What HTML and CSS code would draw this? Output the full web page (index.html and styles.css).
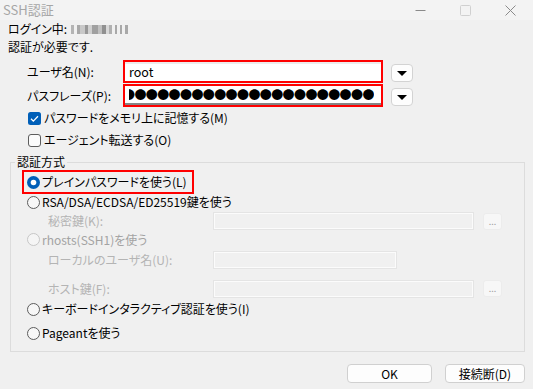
FILE: index.html
```html
<!DOCTYPE html>
<html lang="ja">
<head>
    <meta charset="UTF-8">
    <title>SSH認証</title>
    <link rel="stylesheet" href="styles.css">
</head>
<body>
    <div class="titlebar">
        <span class="title">SSH認証</span>
        <div class="win-controls">
            <span class="win-btn"><svg width="11" height="11" viewBox="0 0 11 11"><path d="M0.5 5.5h10" stroke="#8a8a8a" stroke-width="1"/></svg></span>
            <span class="win-btn"><svg width="11" height="11" viewBox="0 0 11 11"><rect x="0.5" y="0.5" width="10" height="10" rx="1" fill="none" stroke="#d0d0d0"/></svg></span>
            <span class="win-btn"><svg width="11" height="11" viewBox="0 0 11 11"><path d="M0.5 0.5l10 10M10.5 0.5l-10 10" stroke="#8a8a8a" stroke-width="1"/></svg></span>
        </div>
    </div>

    <div class="info">
        <div class="login-line">ログイン中: <span class="masked"></span></div>
        <div class="need-line">認証が必要です.</div>
    </div>

    <div class="field-row first">
        <label class="field-label" for="user">ユーザ名(N):</label>
        <div class="highlight">
            <div class="textbox user-box" id="user">root</div>
        </div>
        <span class="drop-btn"><svg width="10" height="5" viewBox="0 0 10 5"><path d="M0 0h10L5 5z" fill="#000"/></svg></span>
    </div>
    <div class="field-row">
        <label class="field-label" for="pass">パスフレーズ(P):</label>
        <div class="highlight">
            <div class="textbox pass-box" id="pass"><span class="dots">●●●●●●●●●●●●●●●●●●●●●●</span></div>
        </div>
        <span class="drop-btn"><svg width="10" height="5" viewBox="0 0 10 5"><path d="M0 0h10L5 5z" fill="#000"/></svg></span>
    </div>

    <div class="check-row">
        <svg class="box" width="13" height="13" viewBox="0 0 13 13"><rect x="0" y="0" width="13" height="13" rx="2.5" fill="#005fb8"/><path d="M3 6.8l2.3 2.3L10 4.3" fill="none" stroke="#fff" stroke-width="1.3"/></svg>
        <span>パスワードをメモリ上に記憶する(M)</span>
    </div>
    <div class="check-row">
        <svg class="box" width="13" height="13" viewBox="0 0 13 13"><rect x="0.5" y="0.5" width="12" height="12" rx="2.5" fill="#fbfbfb" stroke="#5c5c5c"/></svg>
        <span>エージェント転送する(O)</span>
    </div>

    <fieldset class="group">
        <legend>認証方式</legend>

        <div class="radio-row plain">
            <svg class="dot" width="13" height="13" viewBox="0 0 13 13"><circle cx="6.5" cy="6.5" r="6.5" fill="#005fb8"/><circle cx="6.5" cy="6.5" r="2.8" fill="#fff"/></svg>
            <span>プレインパスワードを使う(L)</span>
        </div>
        <div class="radio-row rsa">
            <svg class="dot" width="13" height="13" viewBox="0 0 13 13"><circle cx="6.5" cy="6.5" r="6" fill="#f7f7f7" stroke="#5c5c5c"/></svg>
            <span>RSA/DSA/ECDSA/ED25519鍵を使う</span>
        </div>
        <div class="sub-row priv">
            <span class="sub-label">秘密鍵(K):</span>
            <span class="dis-input wide"></span>
            <span class="browse-btn">...</span>
        </div>
        <div class="radio-row rhosts disabled">
            <svg class="dot" width="13" height="13" viewBox="0 0 13 13"><circle cx="6.5" cy="6.5" r="6" fill="#f5f5f5" stroke="#c6c6c6"/></svg>
            <span>rhosts(SSH1)を使う</span>
        </div>
        <div class="sub-row local">
            <span class="sub-label">ローカルのユーザ名(U):</span>
            <span class="dis-input narrow"></span>
        </div>
        <div class="sub-row host">
            <span class="sub-label">ホスト鍵(F):</span>
            <span class="dis-input wide"></span>
            <span class="browse-btn">...</span>
        </div>
        <div class="radio-row kbd">
            <svg class="dot" width="13" height="13" viewBox="0 0 13 13"><circle cx="6.5" cy="6.5" r="6" fill="#f7f7f7" stroke="#5c5c5c"/></svg>
            <span>キーボードインタラクティブ認証を使う(I)</span>
        </div>
        <div class="radio-row pageant">
            <svg class="dot" width="13" height="13" viewBox="0 0 13 13"><circle cx="6.5" cy="6.5" r="6" fill="#f7f7f7" stroke="#5c5c5c"/></svg>
            <span>Pageantを使う</span>
        </div>
    </fieldset>

    <div class="buttons">
        <button class="btn ok">OK</button>
        <button class="btn cancel">接続断(D)</button>
    </div>
</body>
</html>
```

FILE: styles.css
```css
html, body {
    margin: 0;
    padding: 0;
}

body {
    width: 533px;
    height: 389px;
    overflow: hidden;
    background-color: #f0f0f0;
    font-family: "Noto Sans CJK JP", "Noto Sans", sans-serif;
    font-size: 12px;
    line-height: 16px;
    font-feature-settings: "palt";
    color: #000;
}

.titlebar {
    display: flex;
    align-items: center;
    height: 20px;
    background-color: #f3f3f3;
}

.title {
    padding-left: 3px;
    font-size: 13px;
    color: #a6a6a6;
}

.win-controls {
    display: flex;
    margin-left: auto;
}

.win-btn {
    display: flex;
    justify-content: center;
    align-items: center;
    width: 45px;
    height: 17px;
}

.info {
    padding-left: 8px;
}

.login-line {
    display: flex;
    align-items: center;
    height: 16px;
    margin-top: 1px;
}

.masked {
    display: inline-block;
    width: 57px;
    height: 9px;
    margin-left: 4px;
    background: linear-gradient(90deg,
        #b4b4b4 0 3px, #f0f0f0 3px 6px, #a8a8a8 6px 9px, #c8c8c8 9px 14px,
        #989898 14px 17px, #d0d0d0 17px 21px, #a0a0a0 21px 27px, #c0c0c0 27px 31px,
        #909090 31px 35px, #d8d8d8 35px 38px, #b0b0b0 38px 41px, #f0f0f0 41px 44px,
        #a8a8a8 44px 46px, #f0f0f0 46px 49px, #a8a8a8 49px 51px, #f0f0f0 51px 54px,
        #a8a8a8 54px 57px);
}

.need-line {
    height: 20px;
    line-height: 20px;
}

.field-row {
    display: flex;
    align-items: center;
    height: 23px;
    margin-top: 1px;
    padding-left: 27px;
}

.field-row.first {
    margin-top: 3px;
}

.field-label {
    width: 96px;
}

.highlight {
    box-sizing: border-box;
    width: 260px;
    height: 23px;
    border: 2px solid #ff0000;
}

.textbox {
    box-sizing: border-box;
    height: 100%;
    background-color: #fff;
}

.user-box {
    padding-left: 4px;
    border-top: 2px solid #ececec;
    line-height: 16px;
    font-size: 12.5px;
}

.pass-box {
    display: flex;
    align-items: center;
    overflow: hidden;
    border-bottom: 2px solid #858585;
}

.dots {
    display: block;
    overflow: hidden;
    white-space: nowrap;
    margin-left: 4px;
    text-indent: -6px;
    font-size: 12px;
    font-feature-settings: normal;
    line-height: 16px;
    letter-spacing: -0.6px;
}

.drop-btn {
    box-sizing: border-box;
    display: flex;
    justify-content: center;
    align-items: center;
    width: 22px;
    height: 18px;
    margin-left: 8px;
    margin-top: 3px;
    background-color: #fdfdfd;
    border: 1px solid #d3d3d3;
    border-radius: 4px;
}

.check-row {
    display: flex;
    align-items: center;
    height: 22px;
    padding-left: 28px;
}

.check-row .box {
    margin-right: 3px;
}

.group {
    margin: 3px 8px 0 10px;
    padding: 0 0 2px 0;
    border: 1px solid #dcdcdc;
    min-width: 0;
}

.group legend {
    margin-left: 4px;
    padding: 0 2px;
    line-height: 16px;
}

.radio-row {
    display: flex;
    align-items: center;
    white-space: nowrap;
    padding-left: 16px;
}

.radio-row .dot {
    flex: none;
    margin-right: 2px;
}

.radio-row.plain {
    box-sizing: border-box;
    width: 172px;
    height: 24px;
    margin-left: 11px;
    padding-left: 3px;
    border: 2px solid #ff0000;
}

.radio-row.rsa {
    height: 16px;
}

.radio-row.rhosts {
    height: 15px;
}

.radio-row.kbd {
    height: 16px;
}

.radio-row.pageant {
    height: 32px;
}

.disabled {
    color: #a3a3a3;
}

.sub-row {
    display: flex;
    align-items: center;
    padding-left: 37px;
}

.sub-row.priv {
    height: 22px;
}

.sub-row.local {
    height: 26px;
}

.sub-row.host {
    height: 28px;
    padding-top: 3px;
    box-sizing: border-box;
}

.sub-label {
    width: 165px;
    color: #b4b4b4;
}

.dis-input {
    box-sizing: border-box;
    height: 18px;
    background-color: #f0f0f0;
    border: 1px solid #e4e4e4;
    box-shadow: inset 0 0 0 1px #fbfbfb;
}

.dis-input.wide {
    width: 261px;
}

.dis-input.narrow {
    width: 184px;
}

.browse-btn {
    box-sizing: border-box;
    display: flex;
    justify-content: center;
    align-items: center;
    width: 19px;
    height: 17px;
    margin-left: 9px;
    background-color: #f7f7f7;
    border: 1px solid #ececec;
    border-radius: 3px;
    font-size: 9px;
    line-height: 9px;
    color: #a0a0a0;
}

.buttons {
    display: flex;
    justify-content: flex-end;
    gap: 13px;
    margin: 12px 8px 0 0;
}

.btn {
    box-sizing: border-box;
    height: 19px;
    padding: 0;
    background-color: #fdfdfd;
    border: 1px solid #d0d0d0;
    border-radius: 4px;
    font-family: "Noto Sans CJK JP", "Noto Sans", sans-serif;
    font-size: 12px;
    line-height: 16px;
    font-feature-settings: "palt";
    color: #000;
}

.btn.ok {
    width: 85px;
}

.btn.cancel {
    width: 80px;
}
```
